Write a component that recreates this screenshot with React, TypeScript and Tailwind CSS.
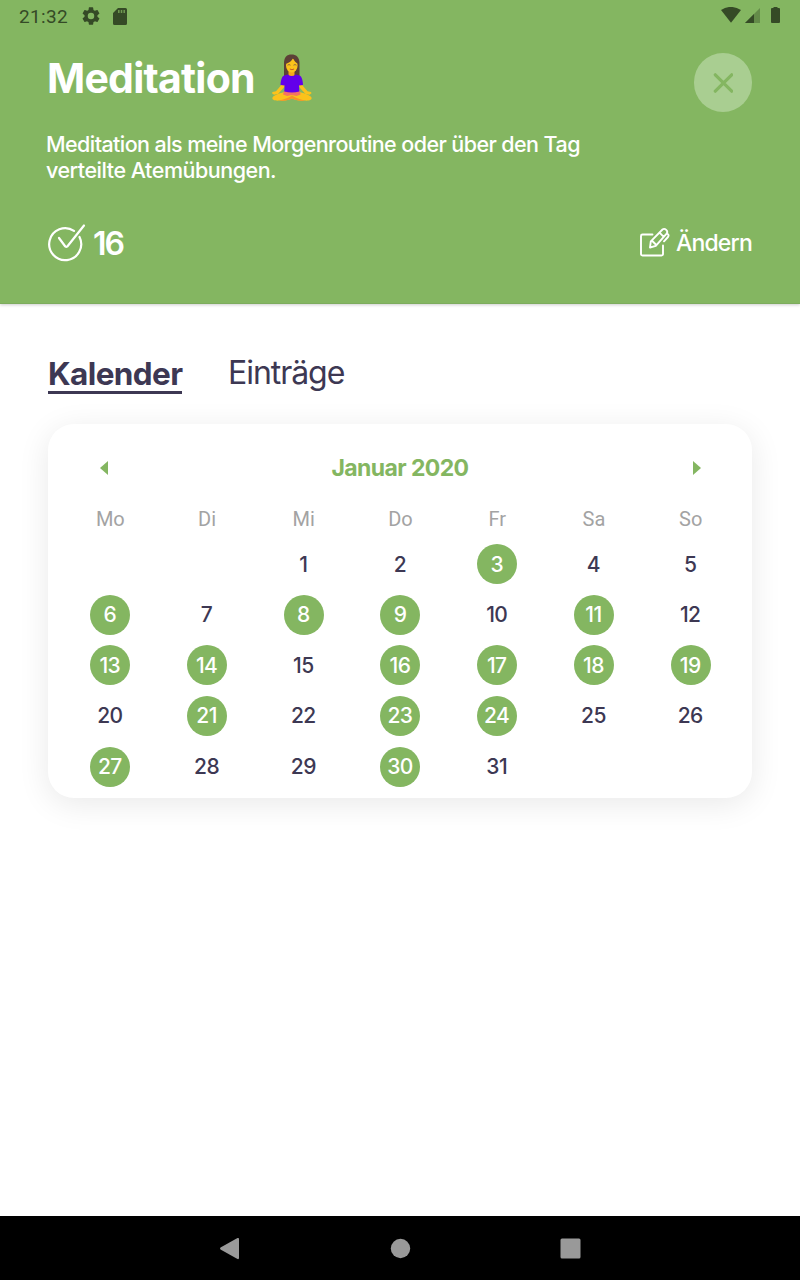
import type { ReactNode } from "react";

const weekdays = ["Mo", "Di", "Mi", "Do", "Fr", "Sa", "So"];
const done = new Set([3, 6, 8, 9, 11, 13, 14, 16, 17, 18, 19, 21, 23, 24, 27, 30]);
const cells: (number | null)[] = [null, null, ...Array.from({ length: 31 }, (_, i) => i + 1)];

function StatusBar() {
  return (
    <div className="flex h-8 items-center pl-[19px] pr-[20px] text-[#354a26]">
      <span className="w-[63px] font-[Roboto] text-[19px] leading-[33px] tracking-[0.35px] whitespace-nowrap">21:32</span>
      <svg className="h-[18px] w-[18px]" viewBox="2 2 20 20" fill="currentColor">
        <path d="M19.14 12.94c.04-.3.06-.61.06-.94 0-.32-.02-.64-.07-.94l2.03-1.58a.49.49 0 0 0 .12-.61l-1.92-3.32a.488.488 0 0 0-.59-.22l-2.39.96c-.5-.38-1.03-.7-1.62-.94l-.36-2.54a.484.484 0 0 0-.48-.41h-3.84c-.24 0-.43.17-.47.41l-.36 2.54c-.59.24-1.13.57-1.62.94l-2.39-.96c-.22-.08-.47 0-.59.22L2.74 8.87c-.12.21-.08.47.12.61l2.03 1.58c-.05.3-.09.63-.09.94s.02.64.07.94l-2.03 1.58a.49.49 0 0 0-.12.61l1.92 3.32c.12.22.37.29.59.22l2.39-.96c.5.38 1.03.7 1.62.94l.36 2.54c.05.24.24.41.48.41h3.84c.24 0 .44-.17.47-.41l.36-2.54c.59-.24 1.13-.56 1.62-.94l2.39.96c.22.08.47 0 .59-.22l1.92-3.32c.12-.22.07-.47-.12-.61l-2.01-1.58zM12 15.6A3.6 3.6 0 1 1 12 8.4a3.6 3.6 0 0 1 0 7.2z" />
      </svg>
      <svg className="ml-[13px] h-[17px] w-[14px]" viewBox="0 0 14 17">
        <path fill="currentColor" d="M5 0h7.500A1.500 1.500 0 0 1 14 1.500v14a1.500 1.500 0 0 1-1.500 1.500h-11A1.500 1.500 0 0 1 0 15.500V5z" />
        <path d="M5.800 2v3M8.500 2v3M11.200 2v3" stroke="#84b661" strokeOpacity=".75" strokeWidth="1.500" />
      </svg>
      <svg className="ml-auto h-[18px] w-[60px]" viewBox="0 0 60 18" fill="currentColor">
        <path d="M1 3Q10.500-3.200 21 3L11 15.800z" />
        <path d="M40 1v15H25z" opacity=".4" />
        <path d="M34 7v9h-9z" />
        <path d="M53.500 0h4v1H59a1 1 0 0 1 1 1v13a1 1 0 0 1-1 1h-7a1 1 0 0 1-1-1V2a1 1 0 0 1 1-1h1.500z" />
      </svg>
    </div>
  );
}

function Lotus() {
  return (
    <svg className="mt-px h-[48px] w-[42px]" viewBox="0 0 42 48">
      <path d="M13 24V9C13 3 16 .5 20.500.5S28.500 3 28.500 9v15z" fill="#5d4037" />
      <path d="M17.500 16h6v7h-6z" fill="#f5a81c" />
      <ellipse cx="20.800" cy="11.500" rx="5.800" ry="7" fill="#fcc21b" />
      <path d="M14.500 10C18 9 21 7 22 4c1 3 3 5 5.500 6C27 4 24.500 2.500 21 2.500S15 5 14.500 10z" fill="#5d4037" />
      <path d="M16.500 11.200q1.500-1.300 3 0M22.500 11.200q1.500-1.300 3 0" fill="none" stroke="#795548" strokeWidth=".8" />
      <path d="M18.800 15q2.200 1.400 4.300 0" fill="none" stroke="#c75c28" strokeWidth="1" />
      <path d="M12 27 9.500 32 5 37.200l-3.500.9-.5 1.200 2 1.500 4-.8 5.500-6 3-6zM29.500 27l2.500 5 4.500 5.200 3.500.9.500 1.200-2 1.500-4-.8-5.500-6-3-6z" fill="#fcc21b" />
      <path d="M13.500 38C9 39 3 41 1.500 43.500c-1 2.500 3 3.500 7 3 5 .5 9-.5 12.500-2 3.500 1.500 7.500 2.500 12.500 2 4 .5 8-.5 7-3-1.500-2.500-7.500-4.500-12-5.500z" fill="#fcc21b" />
      <path d="M8 46.500c6-1 10-3.200 13-5 3 1.800 7 4 13 5-6 .8-10-.3-13-2-3 1.700-7 2.800-13 2z" fill="#f79329" />
      <path d="M13 37h16l.5 3.500-4 1.500-4.700-1-4.700 1-4-1.500z" fill="#f57360" />
      <path d="M17 20.500q3.800 3 7.500 0l4 1c2.500.8 3.500 6 3.500 9.500l-4 .5.3 6q-7.300 2.200-15 0l.3-6-4-.5c0-3.500 1-8.700 3.500-9.500z" fill="#6200ea" />
    </svg>
  );
}

function CheckCircle() {
  return (
    <svg className="h-[40px] w-[40px]" viewBox="0 0 40 40" fill="none" stroke="white" strokeWidth="2.200" strokeLinecap="round" strokeLinejoin="round">
      <path d="M26 7.800A16 16 0 1 0 31.500 14" />
      <path d="m11 15 6.300 8.500q1 .8 2 0L36 2.500" />
    </svg>
  );
}

function Edit() {
  return (
    <svg className="-mt-[3px] h-[30px] w-[30px]" viewBox="0 0 30 30" fill="none" stroke="white" strokeWidth="1.900" strokeLinecap="round" strokeLinejoin="round">
      <path d="M12.500 7.500h-10A1.500 1.500 0 0 0 1 9v18a1.500 1.500 0 0 0 1.500 1.500h19A1.500 1.500 0 0 0 23 27v-8.500" />
      <path d="m10 20.500.8-6.200L22.500 2.500q1.800-1.400 3.700.4t.4 3.700L15.800 18.800zM19.500 5.600l4 4M11.800 13.500l4 4M27 6.500q2.500 1.500 1 3.500L24 14.300" />
    </svg>
  );
}

function Day({ children, marked }: { children: ReactNode; marked: boolean }) {
  return (
    <div className="flex h-[50.600px] items-center justify-center">
      <span className={marked
        ? "flex size-10 items-center justify-center rounded-full bg-[#84b661] pr-px text-[21px] font-medium tracking-[-0.6px] text-white"
        : "flex size-10 items-center justify-center pr-px text-[21px] font-medium tracking-[-0.6px] text-[#3d3853]"}>
        {children}
      </span>
    </div>
  );
}

export default function App() {
  return (
    <div className="flex h-[1280px] w-[800px] flex-col bg-white font-[Inter,sans-serif] text-[#3d3853]">
      <header className="h-[304px] border-b border-[#7dac5d] bg-[#84b661] text-white shadow-[0_1px_3px_rgba(0,0,0,0.2)]">
        <StatusBar />
        <div className="flex justify-between px-12 pt-[21px]">
          <div className="-ml-px flex items-start">
            <h1 className="w-[224px] text-[41px] leading-[50px] font-bold tracking-[-0.75px] whitespace-nowrap">Meditation</h1>
            <Lotus />
          </div>
          <button className="flex h-[59px] w-[58px] items-center justify-center rounded-full bg-[#a9ce91]" aria-label="Schließen">
            <svg className="size-5" viewBox="0 0 20 20" fill="none" stroke="#84b661" strokeWidth="3.200" strokeLinecap="round"><path d="m2.300 1.800 16.400 16.400M18.700 1.800 2.300 18.200" /></svg>
          </button>
        </div>
        <p className="mt-[19px] ml-[46px] h-[52px] text-[21.500px] leading-[26px] font-medium tracking-[-0.580px] whitespace-nowrap">
          Meditation als meine Morgenroutine oder über den Tag<br /><span className="tracking-[-0.480px]">verteilte Atemübungen.</span>
        </p>
        <div className="mt-[40px] flex h-10 items-center justify-between px-12">
          <div className="flex items-center gap-[5px]">
            <CheckCircle />
            <span className="pt-px text-[32px] leading-10 font-semibold tracking-[-2px]">16</span>
          </div>
          <div className="flex items-center gap-[6px]">
            <Edit />
            <span className="text-[23px] leading-10 font-medium tracking-[-0.800px]">Ändern</span>
          </div>
        </div>
      </header>
      <main className="flex-1 px-12 pt-[51px]">
        <nav className="flex h-[39px] items-start gap-[46px] whitespace-nowrap">
          <span className="h-[39px] w-[134px] border-b-[3px] border-[#3d3853] text-[31.500px] leading-[37px] font-bold tracking-[-0.600px]">Kalender</span>
          <span className="text-[32px] leading-[35px] tracking-[-1.050px]">Einträge</span>
        </nav>
        <section className="mt-[30px] h-[374px] rounded-[26px] bg-white px-[13px] pt-[24px] shadow-[0_6px_32px_rgba(0,0,0,0.09)]">
          <div className="flex h-10 items-center justify-between pr-[38px] pl-[39px]">
            <svg className="h-[14px] w-[8px]" viewBox="0 0 8 14"><path d="M8 0v14L0 7z" fill="#84b661" /></svg>
            <h2 className="pr-px text-[23px] font-bold tracking-[-0.600px] text-[#84b661]">Januar 2020</h2>
            <svg className="h-[14px] w-[8px]" viewBox="0 0 8 14"><path d="M0 0v14l8-7z" fill="#84b661" /></svg>
          </div>
          <div className="mt-[15px] ml-px grid h-8 grid-cols-7 font-[Roboto] text-[20px] leading-8 text-[#a3a3a3]">
            {weekdays.map((d) => <span key={d} className="text-center">{d}</span>)}
          </div>
          <div className="mt-[4px] ml-px grid grid-cols-7">
            {cells.map((n, i) => n === null ? <div key={i} /> : <Day key={i} marked={done.has(n)}>{n}</Day>)}
          </div>
        </section>
      </main>
      <footer className="flex h-16 items-center bg-black">
        <svg className="h-16 w-full" viewBox="0 0 800 64" fill="#999">
          <path d="M220.500 31.500 237.500 22q1.500-.5 1.500 1v19q0 1.500-1.500 1l-17-9.500q-1-1 0-2z" />
          <circle cx="400.500" cy="32.500" r="9.700" />
          <rect x="560.500" y="22.500" width="20" height="20" rx="1.500" />
        </svg>
      </footer>
    </div>
  );
}
